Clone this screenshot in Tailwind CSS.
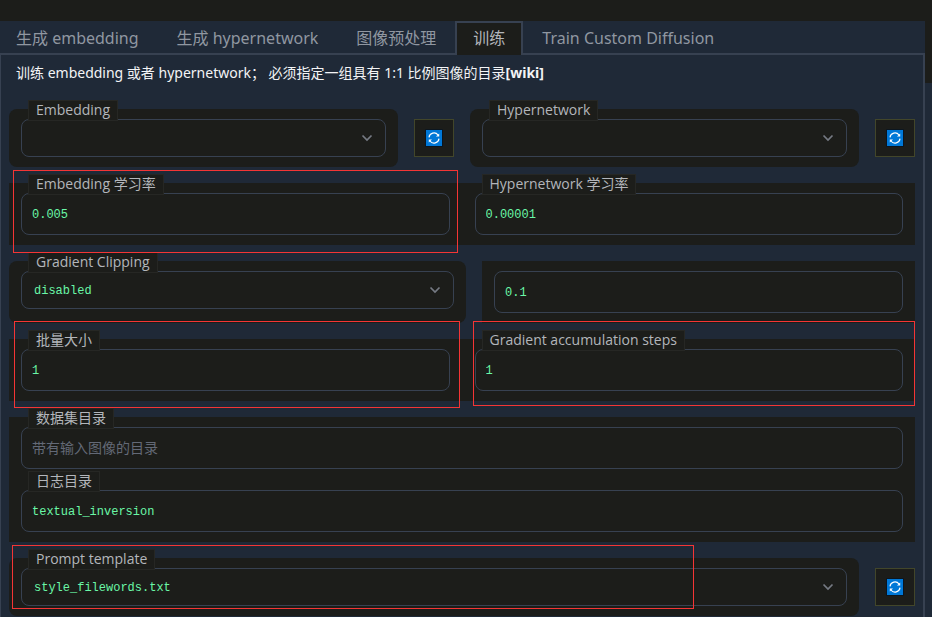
<!DOCTYPE html>
<html lang="zh-CN">
<head>
  <meta charset="UTF-8" />
  <meta name="viewport" content="width=device-width, initial-scale=1.0" />
  <title>训练</title>
  <script src="https://cdn.jsdelivr.net/npm/@tailwindcss/browser@4"></script>
</head>
<body class="min-h-screen flex flex-col pt-[21px] bg-[#1c1d1a] text-sm text-[#b3b6bb] font-['Open_Sans','Noto_Sans_CJK_SC',sans-serif]">

<!-- Shared icons -->
<svg class="hidden">
  <symbol id="chevron" viewBox="0 0 12 8">
    <path d="M1.5 1.5 L6 6 L10.5 1.5" fill="none" stroke="#757a83" stroke-width="1.7" />
  </symbol>
  <symbol id="refresh" viewBox="0 0 18 18">
    <rect width="18" height="18" rx="1" fill="#0b1620" />
    <rect x="1" y="1" width="16" height="16" fill="#0078d7" />
    <path d="M4 8.4 A5 5 0 0 1 13 6 M14 9.6 A5 5 0 0 1 5 12" fill="none" stroke="#fff" stroke-width="1.2" />
    <path d="M14.2 4.4 V7.6 H11 Z M3.8 13.6 V10.4 H7 Z" fill="#fff" />
  </symbol>
</svg>

<div class="flex-1 flex">
  <main class="flex-1 min-w-0 flex flex-col bg-[#1f2937]">

    <!-- Tabs -->
    <nav class="flex h-[34px] -ml-[3px] text-base leading-5 text-[#9097a1] whitespace-nowrap font-['Noto_Sans','Noto_Sans_CJK_SC',sans-serif]">
      <button class="px-[19px] pt-0.5 border-b-2 border-[#374151]">生成 embedding</button>
      <button class="px-[19px] pt-0.5 border-b-2 border-[#374151]">生成 hypernetwork</button>
      <button class="px-[19px] pt-0.5 border-b-2 border-[#374151]">图像预处理</button>
      <button class="px-4 pb-0.5 border-2 border-b-0 border-[#374151] bg-[#1c1d1a] text-[#b3b6bb]">训练</button>
      <button class="px-[19px] pt-0.5 border-b-2 border-[#374151]">Train Custom Diffusion</button>
      <span class="flex-1 border-b-2 border-[#374151]"></span>
    </nav>

    <!-- Train panel -->
    <form class="flex-1 border-l border-r-2 border-[#374151] px-2">
      <p class="h-[54px] px-[7px] pt-2 leading-5 text-gray-100 whitespace-nowrap font-['Noto_Sans','Noto_Sans_CJK_SC',sans-serif]">训练 embedding 或者 hypernetwork； 必须指定一组具有 1:1 比例图像的目录<a href="#" class="font-bold">[wiki]</a></p>

      <div class="flex flex-col gap-4">

        <div class="flex gap-4">
          <div class="flex-1 flex gap-4">
            <div class="flex-1 px-3 py-2.5 rounded-lg bg-[#1c1d1a]">
              <div class="relative">
                <label for="embedding" class="absolute left-[7px] -top-[19px] px-[7px] pb-0.5 border border-[#262724] bg-[#1c1d1a] leading-[17px]">Embedding</label>
                <select id="embedding" class="block w-full h-[38px] px-3 pt-0.5 appearance-none rounded-lg border border-[#374151] text-xs text-[#6af7a7] font-['Liberation_Mono','Noto_Sans_CJK_SC',monospace]"><option></option></select>
                <svg class="absolute right-[13px] top-[15px] w-3 h-2 pointer-events-none"><use href="#chevron" /></svg>
              </div>
            </div>
            <button type="button" aria-label="刷新 Embedding" class="w-10 h-[38px] mt-2.5 flex items-center justify-center border border-[#42462a] bg-[#1c1d1a]">
              <svg class="w-[18px] h-[18px]"><use href="#refresh" /></svg>
            </button>
          </div>
          <div class="flex-1 flex gap-4">
            <div class="flex-1 px-3 py-2.5 rounded-lg bg-[#1c1d1a]">
              <div class="relative">
                <label for="hypernetwork" class="absolute left-[7px] -top-[19px] px-[7px] pb-0.5 border border-[#262724] bg-[#1c1d1a] leading-[17px]">Hypernetwork</label>
                <select id="hypernetwork" class="block w-full h-[38px] px-3 pt-0.5 appearance-none rounded-lg border border-[#374151] text-xs text-[#6af7a7] font-['Liberation_Mono','Noto_Sans_CJK_SC',monospace]"><option></option></select>
                <svg class="absolute right-[13px] top-[15px] w-3 h-2 pointer-events-none"><use href="#chevron" /></svg>
              </div>
            </div>
            <button type="button" aria-label="刷新 Hypernetwork" class="w-10 h-[38px] mt-2.5 flex items-center justify-center border border-[#42462a] bg-[#1c1d1a]">
              <svg class="w-[18px] h-[18px]"><use href="#refresh" /></svg>
            </button>
          </div>
        </div>

        <div class="relative flex gap-[25px] px-3 py-2.5 bg-[#1c1d1a]">
          <div class="relative flex-1">
            <label for="embeddingRate" class="absolute left-[7px] -top-[19px] px-[7px] pb-0.5 border border-[#262724] bg-[#1c1d1a] leading-[17px]">Embedding 学习率</label>
            <input type="text" id="embeddingRate" value="0.005" class="block w-full h-[42px] px-2.5 pt-0.5 rounded-lg border border-[#374151] text-xs text-[#6af7a7] font-['Liberation_Mono','Noto_Sans_CJK_SC',monospace]" />
          </div>
          <div class="relative flex-1">
            <label for="hypernetworkRate" class="absolute left-[7px] -top-[19px] px-[7px] pb-0.5 border border-[#262724] bg-[#1c1d1a] leading-[17px]">Hypernetwork 学习率</label>
            <input type="text" id="hypernetworkRate" value="0.00001" class="block w-full h-[42px] px-2.5 pt-0.5 rounded-lg border border-[#374151] text-xs text-[#6af7a7] font-['Liberation_Mono','Noto_Sans_CJK_SC',monospace]" />
          </div>
          <div class="absolute z-10 left-1 -top-[13px] w-[445px] h-[83px] border border-[#f43535] pointer-events-none"></div>
        </div>

        <div class="flex gap-4">
          <div class="grow-[433] basis-0 px-3 py-2.5 rounded-lg bg-[#1c1d1a]">
            <div class="relative">
              <label for="clipping" class="absolute left-[7px] -top-[19px] px-[7px] pb-0.5 border border-[#262724] bg-[#1c1d1a] leading-[17px]">Gradient Clipping</label>
              <select id="clipping" class="block w-full h-[38px] px-3 pt-0.5 appearance-none rounded-lg border border-[#374151] text-xs text-[#6af7a7] font-['Liberation_Mono','Noto_Sans_CJK_SC',monospace]"><option>disabled</option></select>
              <svg class="absolute right-[13px] top-[15px] w-3 h-2 pointer-events-none"><use href="#chevron" /></svg>
            </div>
          </div>
          <div class="grow-[409] basis-0 px-3 py-2.5 bg-[#1c1d1a]">
            <input type="text" aria-label="Gradient clip value" value="0.1" class="block w-full h-[42px] px-2.5 pt-0.5 rounded-lg border border-[#374151] text-xs text-[#6af7a7] font-['Liberation_Mono','Noto_Sans_CJK_SC',monospace]" />
          </div>
        </div>

        <div class="relative flex gap-[25px] px-3 py-2.5 bg-[#1c1d1a]">
          <div class="relative flex-1">
            <label for="batchSize" class="absolute left-[7px] -top-[19px] px-[7px] pb-0.5 border border-[#262724] bg-[#1c1d1a] leading-[17px]">批量大小</label>
            <input type="text" id="batchSize" value="1" class="block w-full h-[42px] px-2.5 pt-0.5 rounded-lg border border-[#374151] text-xs text-[#6af7a7] font-['Liberation_Mono','Noto_Sans_CJK_SC',monospace]" />
          </div>
          <div class="relative flex-1">
            <label for="gradientSteps" class="absolute left-[7px] -top-[19px] px-[7px] pb-0.5 border border-[#262724] bg-[#1c1d1a] leading-[17px]">Gradient accumulation steps</label>
            <input type="text" id="gradientSteps" value="1" class="block w-full h-[42px] px-2.5 pt-0.5 rounded-lg border border-[#374151] text-xs text-[#6af7a7] font-['Liberation_Mono','Noto_Sans_CJK_SC',monospace]" />
          </div>
          <div class="absolute z-10 left-[5px] -top-[18px] w-[446px] h-[87px] border border-[#f43535] pointer-events-none"></div>
          <div class="absolute z-10 right-0 -top-[18px] w-[442px] h-[85px] border border-[#f43535] pointer-events-none"></div>
        </div>

        <div class="flex flex-col gap-[21px] px-3 py-2.5 bg-[#1c1d1a]">
          <div class="relative">
            <label for="datasetDir" class="absolute left-[7px] -top-[19px] px-[7px] pb-0.5 border border-[#262724] bg-[#1c1d1a] leading-[17px]">数据集目录</label>
            <input type="text" id="datasetDir" placeholder="带有输入图像的目录" class="block w-full h-[42px] px-2.5 pt-0.5 rounded-lg border border-[#374151] text-sm text-[#6af7a7] placeholder:text-[#636976] font-['Liberation_Mono','Noto_Sans_CJK_SC',monospace]" />
          </div>
          <div class="relative">
            <label for="logDir" class="absolute left-[7px] -top-[19px] px-[7px] pb-0.5 border border-[#262724] bg-[#1c1d1a] leading-[17px]">日志目录</label>
            <input type="text" id="logDir" value="textual_inversion" class="block w-full h-[42px] px-2.5 pt-0.5 rounded-lg border border-[#374151] text-xs text-[#6af7a7] font-['Liberation_Mono','Noto_Sans_CJK_SC',monospace]" />
          </div>
        </div>

        <div class="relative flex gap-4">
          <div class="flex-1 px-3 py-2.5 rounded-lg bg-[#1c1d1a]">
            <div class="relative">
              <label for="template" class="absolute left-[7px] -top-[19px] px-[7px] pb-0.5 border border-[#262724] bg-[#1c1d1a] leading-[17px]">Prompt template</label>
              <select id="template" class="block w-full h-[38px] px-3 pt-0.5 appearance-none rounded-lg border border-[#374151] text-xs text-[#6af7a7] font-['Liberation_Mono','Noto_Sans_CJK_SC',monospace]"><option>style_filewords.txt</option></select>
              <svg class="absolute right-[13px] top-[15px] w-3 h-2 pointer-events-none"><use href="#chevron" /></svg>
            </div>
          </div>
          <button type="button" aria-label="刷新 Prompt template" class="w-10 h-[38px] mt-2.5 flex items-center justify-center border border-[#42462a] bg-[#1c1d1a]">
            <svg class="w-[18px] h-[18px]"><use href="#refresh" /></svg>
          </button>
          <div class="absolute z-10 left-[3px] -top-[13px] w-[682px] h-16 border border-[#f43535] pointer-events-none"></div>
        </div>

      </div>
    </form>
  </main>
  <div class="w-[7px] mt-[62px] bg-[#1f2937]"></div>
</div>

</body>
</html>
